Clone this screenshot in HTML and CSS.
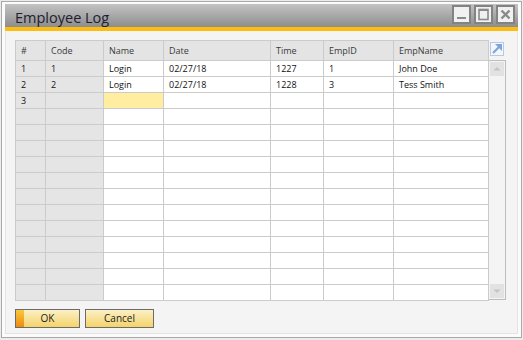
FILE: index.html
```html
<!DOCTYPE html>
<html>
<head>
<meta charset="utf-8">
<link rel="stylesheet" href="styles.css">
</head>
<body>
<div class="window">
  <div class="titlebar">
    <div class="title">Employee Log</div>
    <div class="winbtns">
      <div class="wbtn"><svg width="15" height="15" viewBox="0 0 15 15"><rect x="3" y="10" width="9" height="2" fill="#8a8a8a"/></svg></div>
      <div class="wbtn"><svg width="15" height="15" viewBox="0 0 15 15"><rect x="3" y="2.5" width="9" height="10" fill="none" stroke="#8a8a8a" stroke-width="1.6"/><rect x="3" y="2" width="9" height="2" fill="#8a8a8a"/></svg></div>
      <div class="wbtn"><svg width="15" height="15" viewBox="0 0 15 15"><path d="M3.5 3.5 L11.5 11.5 M11.5 3.5 L3.5 11.5" stroke="#8a8a8a" stroke-width="2.4"/></svg></div>
    </div>
  </div>
  <div class="accent"></div>
  <div class="panel">
    <div class="gridarea">
      <table class="grid">
        <colgroup>
          <col class="c-num"><col class="c-code"><col class="c-name"><col class="c-date"><col class="c-time"><col class="c-empid"><col class="c-empname">
        </colgroup>
        <thead>
          <tr><th>#</th><th>Code</th><th>Name</th><th>Date</th><th>Time</th><th>EmpID</th><th>EmpName</th></tr>
        </thead>
        <tbody>
          <tr><td class="g">1</td><td class="g">1</td><td>Login</td><td>02/27/18</td><td>1227</td><td>1</td><td>John Doe</td></tr>
          <tr><td class="g">2</td><td class="g">2</td><td>Login</td><td>02/27/18</td><td>1228</td><td>3</td><td>Tess Smith</td></tr>
          <tr><td class="g">3</td><td class="g"></td><td class="active"></td><td></td><td></td><td></td><td></td></tr>
          <tr><td class="g"></td><td class="g"></td><td></td><td></td><td></td><td></td><td></td></tr>
          <tr><td class="g"></td><td class="g"></td><td></td><td></td><td></td><td></td><td></td></tr>
          <tr><td class="g"></td><td class="g"></td><td></td><td></td><td></td><td></td><td></td></tr>
          <tr><td class="g"></td><td class="g"></td><td></td><td></td><td></td><td></td><td></td></tr>
          <tr><td class="g"></td><td class="g"></td><td></td><td></td><td></td><td></td><td></td></tr>
          <tr><td class="g"></td><td class="g"></td><td></td><td></td><td></td><td></td><td></td></tr>
          <tr><td class="g"></td><td class="g"></td><td></td><td></td><td></td><td></td><td></td></tr>
          <tr><td class="g"></td><td class="g"></td><td></td><td></td><td></td><td></td><td></td></tr>
          <tr><td class="g"></td><td class="g"></td><td></td><td></td><td></td><td></td><td></td></tr>
          <tr><td class="g"></td><td class="g"></td><td></td><td></td><td></td><td></td><td></td></tr>
          <tr><td class="g"></td><td class="g"></td><td></td><td></td><td></td><td></td><td></td></tr>
          <tr><td class="g"></td><td class="g"></td><td></td><td></td><td></td><td></td><td></td></tr>
        </tbody>
      </table>
      <div class="side">
        <div class="expand"><svg width="14" height="14" viewBox="0 0 14 14"><rect x="0.5" y="0.5" width="13" height="13" fill="#f3f6fb" stroke="#b7c9e4"/><path d="M3 11 L9.5 4.5" stroke="#7ea4d8" stroke-width="2.2"/><polygon points="5,2 12,2 12,9" fill="#7ea4d8"/></svg></div>
        <div class="scroll">
          <div class="sbtn"><svg width="14" height="14" viewBox="0 0 14 14"><polygon points="3.5,8.5 10.5,8.5 7,5" fill="#c4c4c4"/></svg></div>
          <div class="sbtn"><svg width="14" height="14" viewBox="0 0 14 14"><polygon points="3.5,5.5 10.5,5.5 7,9" fill="#c4c4c4"/></svg></div>
        </div>
      </div>
    </div>
    <div class="actions">
      <button class="btn ok">OK</button>
      <button class="btn">Cancel</button>
    </div>
  </div>
</div>
</body>
</html>
```
FILE: styles.css
```css
html, body {
  margin: 0;
  padding: 0;
  background: #ececec;
}
body {
  width: 523px;
  height: 340px;
  overflow: hidden;
  font-family: "Open Sans", "Noto Sans", sans-serif;
}
.window {
  box-sizing: border-box;
  margin: 1px 0 0 1px;
  width: 521px;
  height: 337px;
  border: 1px solid #a9a9a9;
  background: #fbfbfb;
  padding: 2px 3px 3px 3px;
  display: flex;
  flex-direction: column;
}
.titlebar {
  height: 23px;
  flex: none;
  background: linear-gradient(#c3c3c3, #8d8d8d);
  display: flex;
  align-items: flex-start;
  justify-content: space-between;
  padding: 0 3px 0 10px;
}
.title {
  font-size: 14.5px;
  line-height: 23px;
  color: #1b2130;
  margin-top: 2px;
}
.winbtns {
  display: flex;
  gap: 3px;
  margin-top: 1px;
}
.wbtn {
  box-sizing: border-box;
  width: 19px;
  height: 19px;
  border: 2px solid #838383;
  background: #f1f1f1;
  display: flex;
  align-items: center;
  justify-content: center;
}
.wbtn svg { display: block; }
.accent {
  height: 4px;
  flex: none;
  background: #fdbd10;
}
.panel {
  flex: 1;
  background: #f4f4f4;
  border: 1px solid #e3e3e3;
  border-top: none;
  padding: 9px 0 0 9px;
}
.gridarea {
  display: flex;
  align-items: flex-start;
}
.grid {
  table-layout: fixed;
  border-collapse: separate;
  border-spacing: 0;
  border-left: 1px solid #cbcbcb;
  border-top: 1px solid #cbcbcb;
  font-size: 9px;
  width: 474px;
}
.c-num { width: 30px; }
.c-code { width: 58px; }
.c-name { width: 60px; }
.c-date { width: 107px; }
.c-time { width: 53px; }
.c-empid { width: 70px; }
.c-empname { width: 95px; }
.grid th, .grid td {
  box-sizing: border-box;
  border-right: 1px solid #cbcbcb;
  border-bottom: 1px solid #cbcbcb;
  padding: 0 0 0 5px;
  text-align: left;
  white-space: nowrap;
  overflow: hidden;
}
.grid th {
  height: 20px;
  background: #e4e4e4;
  font-weight: normal;
  color: #3a3a3a;
}
.grid td {
  height: 16px;
  background: #ffffff;
  color: #111;
  line-height: 14px;
}
.grid td.g { background: #e5e5e5; }
.grid td.active { background: #ffee9f; }
.side {
  display: flex;
  flex-direction: column;
  width: 17px;
}
.expand {
  height: 20px;
  padding: 2px 0 0 1px;
  box-sizing: border-box;
}
.expand svg { display: block; }
.scroll {
  box-sizing: border-box;
  height: 240px;
  border-top: 1px solid #bdbdbd;
  border-right: 1px solid #bdbdbd;
  border-bottom: 1px solid #bdbdbd;
  padding: 1px 0 1px 1px;
  display: flex;
  flex-direction: column;
  justify-content: space-between;
}
.sbtn {
  width: 14px;
  height: 14px;
  background: #e2e2e2;
}
.sbtn svg { display: block; }
.actions {
  display: flex;
  gap: 5px;
  margin-top: 8px;
}
.btn {
  box-sizing: border-box;
  height: 19px;
  width: 65px;
  border: 1px solid #6b6b6b;
  border-radius: 0;
  background: linear-gradient(#fcf0c6, #f4d36a);
  font-family: "Open Sans", "Noto Sans", sans-serif;
  font-size: 10px;
  color: #222;
  padding: 0;
  margin: 0;
  line-height: 17px;
}
.btn + .btn { width: 69px; }
.btn.ok {
  background:
    linear-gradient(#f9c83c, #ee8a10) left top / 8px 100% no-repeat,
    linear-gradient(#fcf0c6, #f4d36a);
}
```
